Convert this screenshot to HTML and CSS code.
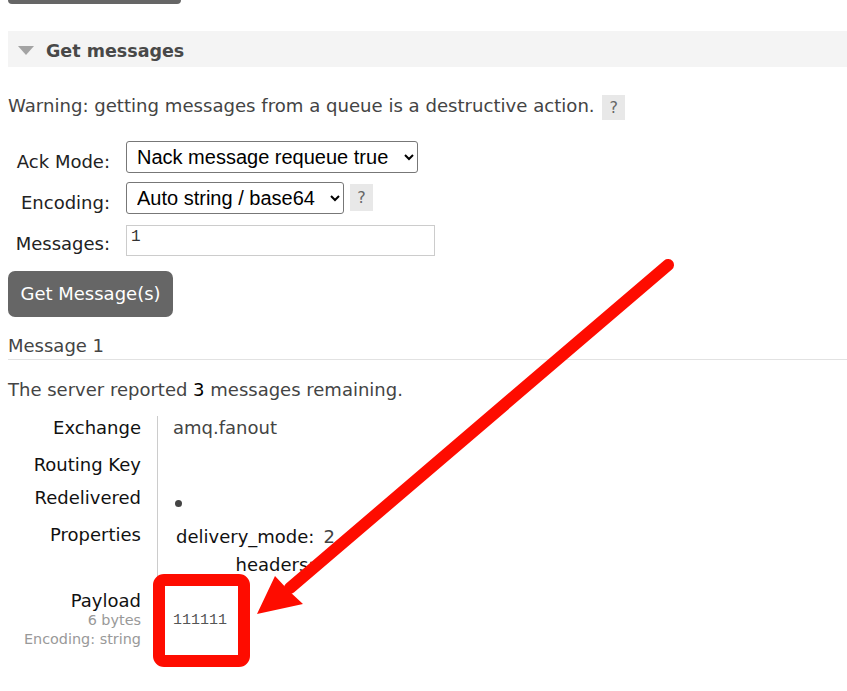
FILE: index.html
```html
<!DOCTYPE html>
<html>
<head>
<meta charset="utf-8">
<link rel="stylesheet" href="styles.css">
</head>
<body>
<div class="page">
  <div class="btn-stub"></div>
  <div class="section-head"><span class="tri"></span><h2>Get messages</h2></div>
  <p class="warning">Warning: getting messages from a queue is a destructive action. <span class="help">?</span></p>
  <div class="form">
    <label class="lbl l1">Ack Mode:</label>
    <div class="field"><select class="sel sel-ack"><option>Nack message requeue true</option></select></div>
    <label class="lbl l2">Encoding:</label>
    <div class="field"><select class="sel sel-enc"><option>Auto string / base64</option></select><span class="help help2">?</span></div>
    <label class="lbl l3">Messages:</label>
    <div class="field"><input class="num" type="text" value="1"></div>
  </div>
  <button class="btn">Get Message(s)</button>
  <h3 class="msg-title">Message 1</h3>
  <p class="remaining">The server reported <b>3</b> messages remaining.</p>
  <table class="details">
    <tr class="r-ex"><th>Exchange</th><td>amq.fanout</td></tr>
    <tr class="r-rk"><th>Routing Key</th><td></td></tr>
    <tr class="r-rd"><th>Redelivered</th><td><span class="dot"></span></td></tr>
    <tr class="r-pr"><th>Properties</th><td>
      <table class="props">
        <tr><th>delivery_mode:</th><td>2</td></tr>
        <tr><th>headers:</th><td></td></tr>
      </table>
    </td></tr>
    <tr class="r-pl"><th>Payload<br><small>6 bytes</small><br><small>Encoding: string</small></th><td><pre class="payload">111111</pre></td></tr>
  </table>
</div>
<svg class="annot" width="847" height="691" viewBox="0 0 847 691">
  <rect x="159" y="580" width="85" height="81" rx="5" ry="5" fill="none" stroke="#fe0c00" stroke-width="12"/>
  <line x1="668" y1="265" x2="290" y2="588" stroke="#fe0c00" stroke-width="12" stroke-linecap="round"/>
  <polygon points="257,614 275,576 289,591 303,604" fill="#fe0c00"/>
</svg>
</body>
</html>
```
FILE: styles.css
```css
html, body {
  margin: 0;
  padding: 0;
  background: #fff;
}
body {
  font-family: "DejaVu Sans", Verdana, sans-serif;
  font-size: 18px;
  color: #444;
  overflow: hidden;
  width: 847px;
  height: 691px;
  position: relative;
}
.page {
  padding: 0 0 0 8px;
}
.btn-stub {
  width: 173px;
  height: 4px;
  background: #666;
  border-radius: 0 0 6px 6px;
}
.section-head {
  margin-top: 27px;
  height: 36px;
  background: #f4f4f4;
  display: flex;
  align-items: center;
}
.tri {
  width: 0;
  height: 0;
  margin-left: 10px;
  margin-top: 2px;
  border-left: 8px solid transparent;
  border-right: 8px solid transparent;
  border-top: 9px solid #a3a3a3;
}
.section-head h2 {
  margin: 3px 0 0 12px;
  font-size: 17.5px;
  font-weight: bold;
  color: #484848;
}
.warning {
  margin: 26px 0 0 0;
  line-height: 26px;
  color: #444;
  font-size: 18.1px;
}
.help {
  display: inline-block;
  width: 23px;
  height: 25px;
  line-height: 25px;
  text-align: center;
  background: #e8e8e8;
  color: #666;
  font-size: 16px;
  vertical-align: middle;
  margin-left: 2px;
}
.form {
  margin-top: 21px;
  display: grid;
  grid-template-columns: 102px auto;
  column-gap: 16px;
  row-gap: 9px;
  align-items: center;
}
.lbl {
  text-align: right;
  color: #222;
  padding-top: 9px;
  font-size: 18px;
  white-space: nowrap;
}
.field {
  display: flex;
  align-items: center;
  gap: 6px;
}
.sel {
  font-family: "Liberation Sans", Arial, sans-serif;
  font-size: 20px;
  height: 32px;
  color: #000;
  background: #fff;
  border: 1px solid #777;
  border-radius: 3px;
  padding: 0 4px 0 6px;
}
.sel-ack { width: 292px; }
.sel-enc { width: 218px; }
.help2 { height: 27px; line-height: 27px; margin-left: 0; }
.num {
  box-sizing: border-box;
  width: 309px;
  height: 31px;
  border: 1px solid #ccc;
  padding: 0 0 6px 4px;
  font-family: "Liberation Mono", monospace;
  font-size: 16px;
  color: #333;
  margin-top: 2px;
  line-height: 18px;
}
.btn {
  display: block;
  margin-top: 15px;
  width: 165px;
  height: 46px;
  background: #666;
  color: #fff;
  border: none;
  border-radius: 7px;
  font-family: "DejaVu Sans", Verdana, sans-serif;
  font-size: 18px;
  padding: 0;
}
.msg-title {
  margin: 18px 0 0 0;
  font-weight: normal;
  font-size: 18px;
  color: #444;
  padding-bottom: 2px;
  border-bottom: 1px solid #e2e2e2;
  line-height: 22px;
}
.remaining {
  margin: 19px 0 0 0;
  line-height: 22px;
}
.remaining b {
  font-weight: normal;
  color: #000;
}
.details {
  border-collapse: collapse;
  margin-top: 15px;
}
.details > tbody > tr > th {
  width: 133px;
  text-align: right;
  vertical-align: top;
  font-weight: normal;
  color: #111;
  padding: 3px 16px 3px 0;
  border-right: 1px solid #ccc;
  line-height: 24px;
}
.details > tbody > tr > td {
  vertical-align: middle;
  padding: 3px 0 3px 15px;
  color: #444;
  line-height: 24px;
}
.r-ex > th, .r-ex > td { padding-top: 0 !important; padding-bottom: 10px !important; }
.r-rk > th { padding-bottom: 6px !important; }
.r-rd > th { padding-bottom: 13px !important; }
.dot {
  display: inline-block;
  width: 7px;
  height: 7px;
  border-radius: 50%;
  background: #444;
  margin-left: 2px;
  vertical-align: middle;
}
.props {
  border-collapse: collapse;
}
.props th {
  text-align: right;
  font-weight: normal;
  color: #111;
  padding: 0 9px 0 3px;
  line-height: 28px;
}
.props td {
  padding: 0;
  color: #444;
  line-height: 28px;
}
.r-pr > td { padding-top: 0 !important; padding-bottom: 0 !important; }
.r-pr > th { padding-top: 0 !important; }
.r-pl > th {
  line-height: 18px !important;
  padding-top: 13px !important;
}
.r-pl > th small {
  font-size: 14.4px;
  color: #999;
}
.payload {
  margin: 0;
  font-family: "Liberation Mono", monospace;
  font-size: 15px;
  color: #555;
  padding-top: 13px;
}
.annot {
  position: absolute;
  left: 0;
  top: 0;
  pointer-events: none;
}
```
